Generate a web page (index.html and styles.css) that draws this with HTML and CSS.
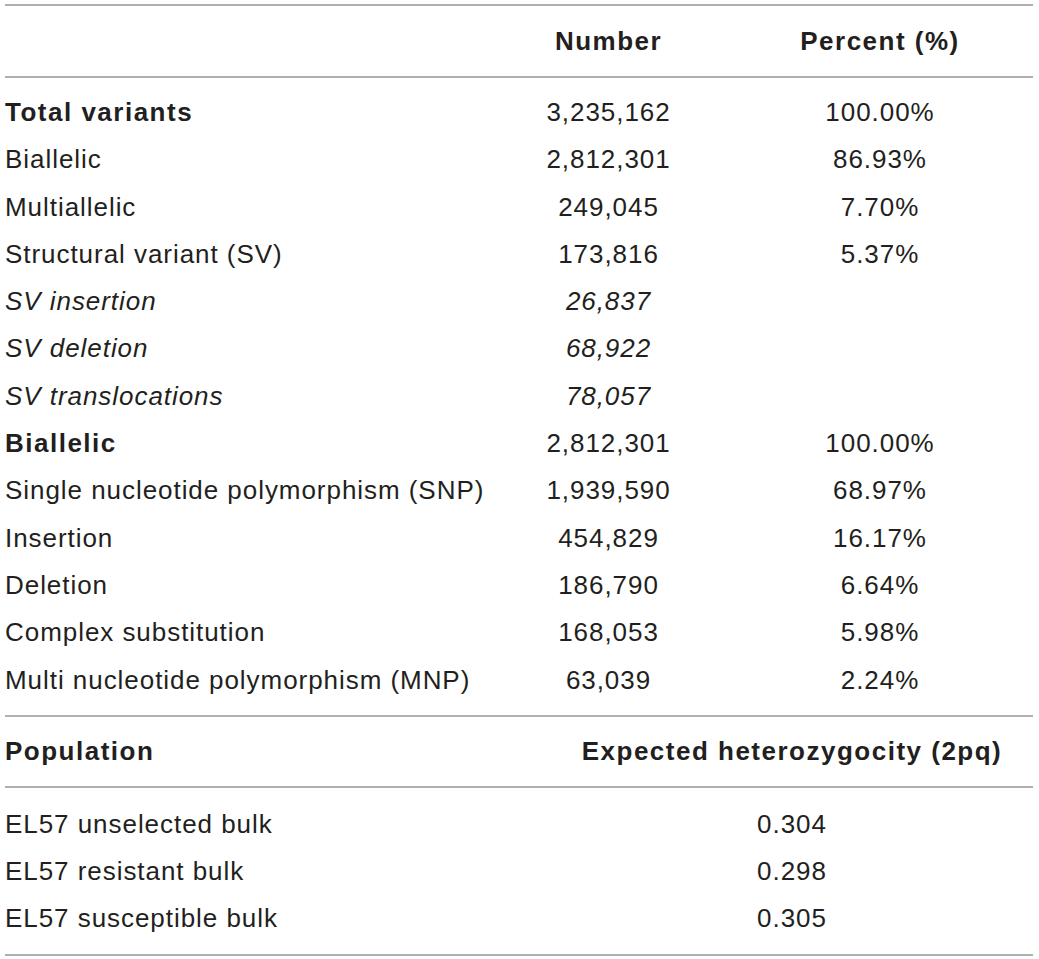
FILE: index.html
```html
<!DOCTYPE html>
<html>
<head>
<meta charset="utf-8">
<link rel="stylesheet" href="styles.css">
</head>
<body>
<div class="wrap">
<table class="tbl main">
  <colgroup><col class="c1"><col class="c2"><col class="c3"></colgroup>
  <thead>
    <tr><th class="lab"></th><th>Number</th><th>Percent (%)</th></tr>
  </thead>
  <tbody>
    <tr class="first"><td class="lab b">Total variants</td><td>3,235,162</td><td>100.00%</td></tr>
    <tr><td class="lab">Biallelic</td><td>2,812,301</td><td>86.93%</td></tr>
    <tr><td class="lab">Multiallelic</td><td>249,045</td><td>7.70%</td></tr>
    <tr><td class="lab">Structural variant (SV)</td><td>173,816</td><td>5.37%</td></tr>
    <tr class="it"><td class="lab">SV insertion</td><td>26,837</td><td></td></tr>
    <tr class="it"><td class="lab">SV deletion</td><td>68,922</td><td></td></tr>
    <tr class="it"><td class="lab">SV translocations</td><td>78,057</td><td></td></tr>
    <tr><td class="lab b">Biallelic</td><td>2,812,301</td><td>100.00%</td></tr>
    <tr><td class="lab">Single nucleotide polymorphism (SNP)</td><td>1,939,590</td><td>68.97%</td></tr>
    <tr><td class="lab">Insertion</td><td>454,829</td><td>16.17%</td></tr>
    <tr><td class="lab">Deletion</td><td>186,790</td><td>6.64%</td></tr>
    <tr><td class="lab">Complex substitution</td><td>168,053</td><td>5.98%</td></tr>
    <tr class="last"><td class="lab">Multi nucleotide polymorphism (MNP)</td><td>63,039</td><td>2.24%</td></tr>
  </tbody>
</table>
<table class="tbl pop">
  <colgroup><col class="p1"><col class="p2"></colgroup>
  <thead>
    <tr><th class="lab">Population</th><th>Expected heterozygocity (2pq)</th></tr>
  </thead>
  <tbody>
    <tr class="first"><td class="lab">EL57 unselected bulk</td><td>0.304</td></tr>
    <tr><td class="lab">EL57 resistant bulk</td><td>0.298</td></tr>
    <tr class="last"><td class="lab">EL57 susceptible bulk</td><td>0.305</td></tr>
  </tbody>
</table>
</div>
</body>
</html>
```

FILE: styles.css
```css
html, body {
  margin: 0;
  padding: 0;
  background: #ffffff;
}
.wrap {
  padding: 4px 0 0 5px;
  width: 1028px;
}
.tbl {
  width: 1028px;
  border-collapse: collapse;
  table-layout: fixed;
  font-family: "Liberation Sans", Arial, sans-serif;
  font-size: 26px;
  letter-spacing: 0.95px;
  color: #231f20;
}
.c1 { width: 485px; }
.c2 { width: 237px; }
.c3 { width: 306px; }
.p1 { width: 546px; }
.p2 { width: 482px; }
.tbl th, .tbl td {
  padding: 0;
  text-align: center;
  white-space: nowrap;
}
.tbl .lab { text-align: left; }
.tbl th {
  font-weight: bold;
  letter-spacing: 1.5px;
  height: 70px;
  line-height: 70px;
}
.tbl td {
  height: 47.3px;
  line-height: 47.3px;
}
.main thead tr { border-top: 2px solid #b0b0b0; }
.tbl thead tr { border-bottom: 2px solid #b0b0b0; }
.tbl tbody tr.last { border-bottom: 2px solid #b0b0b0; }
.main tr.first td { padding-top: 11px; }
.main tr.last td { padding-bottom: 11px; }
.pop th { height: 69px; line-height: 69px; }
.pop tr.first td { padding-top: 13px; }
.pop tr.last td { padding-bottom: 11px; }
.tbl .b { font-weight: bold; letter-spacing: 1.5px; }
.it td { font-style: italic; }
```
